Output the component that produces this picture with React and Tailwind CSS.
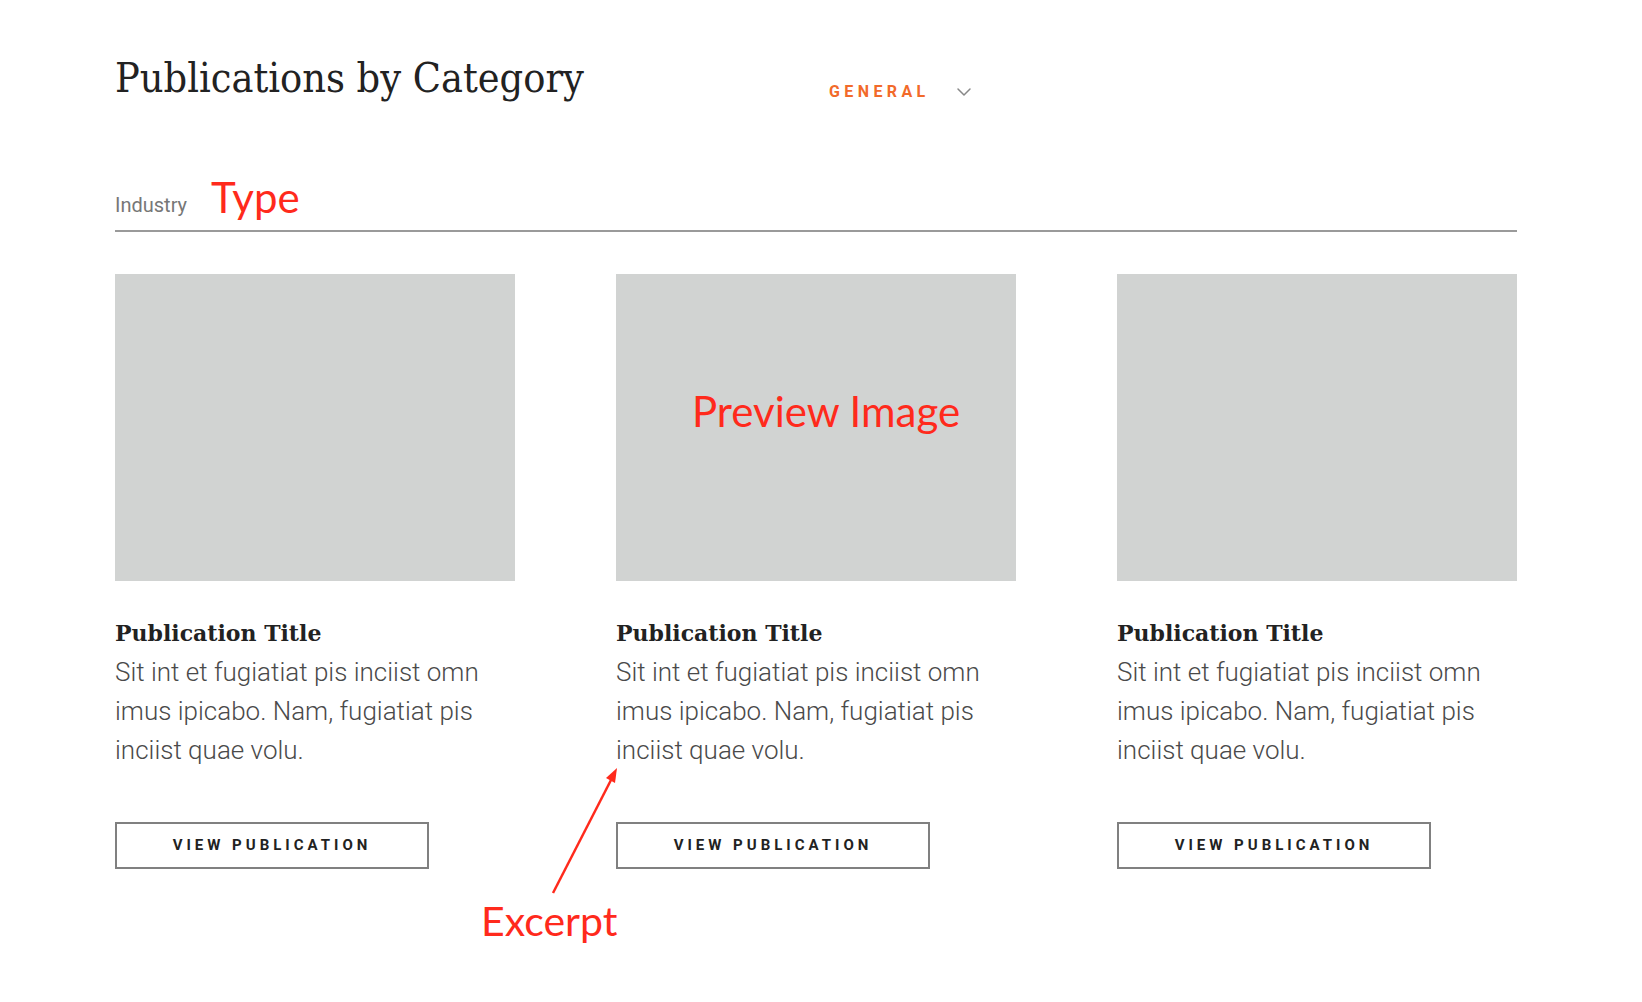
import { ChevronDown } from "lucide-react";

const cards = [
  { id: 1, title: "Publication Title", excerpt: "Sit int et fugiatiat pis inciist omn imus ipicabo. Nam, fugiatiat pis inciist quae volu." },
  { id: 2, title: "Publication Title", excerpt: "Sit int et fugiatiat pis inciist omn imus ipicabo. Nam, fugiatiat pis inciist quae volu." },
  { id: 3, title: "Publication Title", excerpt: "Sit int et fugiatiat pis inciist omn imus ipicabo. Nam, fugiatiat pis inciist quae volu." },
];

const slab = "font-['DejaVu_Serif',serif]";
const note = "font-['Lato',sans-serif] text-[#ff2a1c]";

export default function App() {
  return (
    <div className="relative min-h-screen bg-white pl-[115px] pt-[52px] font-['Roboto',sans-serif]">
      <div className="w-[1402px]">
        {/* header row */}
        <div className="flex items-start">
          <h1 className={`${slab} font-stretch-condensed text-[41px] leading-[52px] text-[#222] w-[714px]`}>
            Publications by Category
          </h1>
          <button className="flex items-center gap-[22px] mt-[28px]">
            <span className="font-['Roboto',sans-serif] font-bold text-[16px] tracking-[4.4px] text-[#f26a2a]">GENERAL</span>
            <ChevronDown className="w-[24px] h-[24px] text-[#888]" strokeWidth={1.5} />
          </button>
        </div>

        {/* tabs */}
        <div className="mt-[72px] flex items-end gap-[24px] border-b-2 border-[#9a9a9a] pb-[12px]">
          <span className="text-[20px] text-[#777] leading-none pb-[3px]">Industry</span>
          <span className={`${note} text-[42px] leading-none`}>Type</span>
        </div>

        {/* cards */}
        <div className="grid grid-cols-3 gap-x-[101px] mt-[42px]">
          {cards.map((c) => (
            <div key={c.id} className="flex flex-col">
              <div className="relative h-[307px] bg-[#d1d3d2]">
                {c.id === 2 && (
                  <span className={`${note} absolute left-[76px] top-[116px] text-[42px] leading-none whitespace-nowrap`}>
                    Preview Image
                  </span>
                )}
              </div>
              <h3 className={`${slab} font-bold text-[22px] leading-[28px] text-[#222] mt-[38px]`}>
                {c.title}
              </h3>
              <p className="text-[26px] font-light leading-[39px] text-[#4a4a4a] mt-[6px] w-[390px]">
                {c.excerpt}
              </p>
              <button className="mt-[52px] w-[314px] h-[47px] border-2 border-[#808080] flex items-center justify-center">
                <span className="font-bold text-[15px] tracking-[4px] text-[#222]">VIEW PUBLICATION</span>
              </button>
            </div>
          ))}
        </div>
      </div>

      {/* excerpt callout */}
      <svg className="absolute left-[540px] top-[760px]" width="100" height="150" viewBox="0 0 100 150">
        <line x1="13" y1="133" x2="71" y2="20" stroke="#ff2a1c" strokeWidth="2.5" />
        <polygon points="77,8 75,23 66,18" fill="#ff2a1c" />
      </svg>
      <span className={`${note} absolute left-[481px] top-[900px] text-[41px] leading-none`}>Excerpt</span>
    </div>
  );
}
